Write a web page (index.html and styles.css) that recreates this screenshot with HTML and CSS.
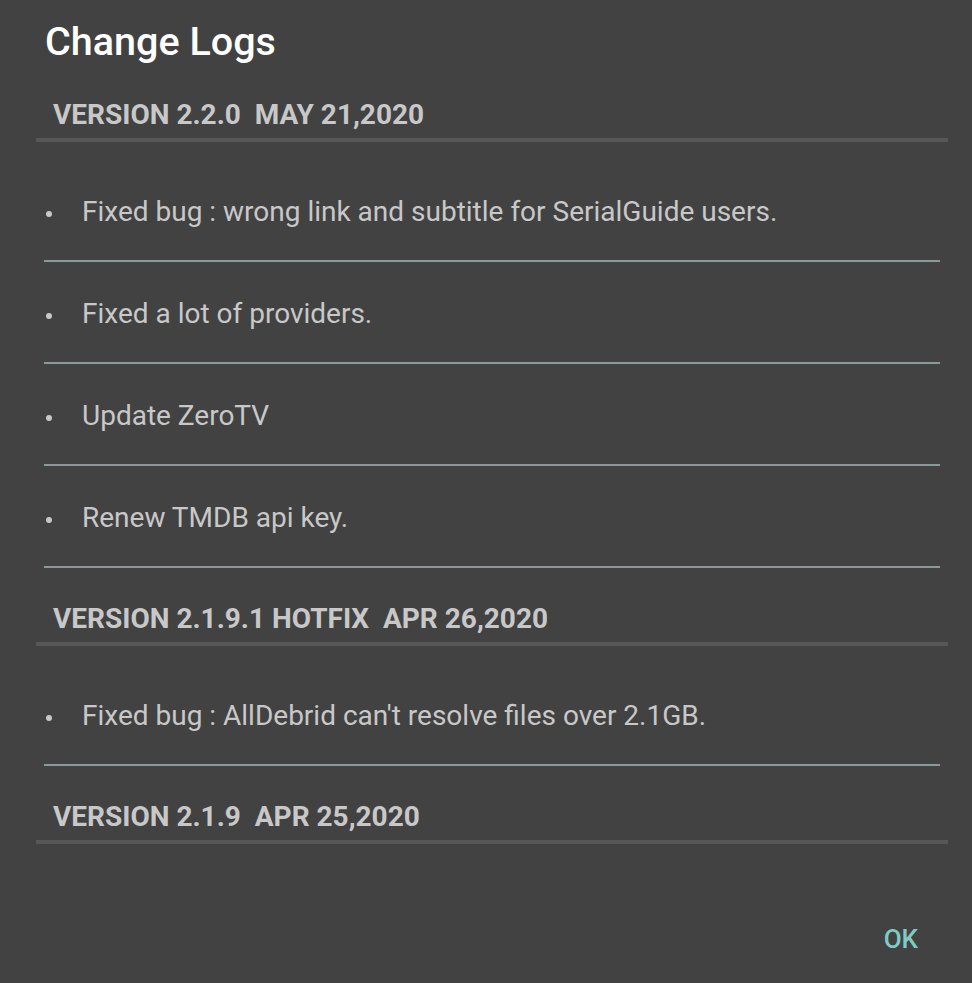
FILE: index.html
```html
<!DOCTYPE html>
<html lang="en">
<head>
    <meta charset="UTF-8">
    <meta name="viewport" content="width=device-width, initial-scale=1.0">
    <title>Change Logs</title>
    <link rel="stylesheet" href="styles.css">
</head>
<body>
    <div class="dialog">
        <h1 class="dialog-title">Change Logs</h1>

        <div class="log-list">
            <div class="version-header">VERSION 2.2.0&nbsp;&nbsp;MAY 21,2020</div>
            <ul class="change-list">
                <li class="change-item">Fixed bug : wrong link and subtitle for SerialGuide users.</li>
                <li class="change-item">Fixed a lot of providers.</li>
                <li class="change-item">Update ZeroTV</li>
                <li class="change-item">Renew TMDB api key.</li>
            </ul>

            <div class="version-header">VERSION 2.1.9.1 HOTFIX&nbsp;&nbsp;APR 26,2020</div>
            <ul class="change-list">
                <li class="change-item">Fixed bug : AllDebrid can't resolve files over 2.1GB.</li>
            </ul>

            <div class="version-header">VERSION 2.1.9&nbsp;&nbsp;APR 25,2020</div>
        </div>

        <div class="dialog-actions">
            <button class="ok-button">OK</button>
        </div>
    </div>
</body>
</html>
```

FILE: styles.css
```css
body {
    font-family: Roboto, "Noto Sans", sans-serif;
    background-color: #424242;
    color: #fff;
    margin: 0;
    padding: 0;
}

.dialog {
    padding: 0 24px 0 36px;
}

.dialog-title {
    font-size: 39.5px;
    font-weight: 500;
    line-height: 44px;
    margin: 0;
    padding: 20px 0 0 9px;
    color: #fff;
}

.version-header {
    font-size: 28px;
    font-weight: 700;
    line-height: 32px;
    color: #c8c8c8;
    padding: 35px 0 7px 17px;
    border-bottom: 4px solid #575757;
}

.log-list .version-header:first-child {
    padding-top: 0;
}

.log-list {
    margin-top: 35px;
}

.change-list {
    list-style: none;
    margin: 18px 8px 0 8px;
    padding: 0;
}

.change-item {
    position: relative;
    font-size: 28px;
    line-height: 32px;
    color: #c8c8c8;
    padding: 36px 0 32px 38px;
    border-bottom: 2px solid #8a9999;
}

.change-item::before {
    content: "";
    position: absolute;
    left: 2px;
    top: 51px;
    width: 6px;
    height: 6px;
    border-radius: 50%;
    background-color: #c8c8c8;
}

.dialog-actions {
    display: flex;
    justify-content: flex-end;
    margin-top: 80px;
}

.ok-button {
    font-family: Roboto, "Noto Sans", sans-serif;
    font-size: 26px;
    font-weight: 500;
    color: #80cbc4;
    background: none;
    border: none;
    padding: 0 30px 0 0;
    cursor: pointer;
}
```
